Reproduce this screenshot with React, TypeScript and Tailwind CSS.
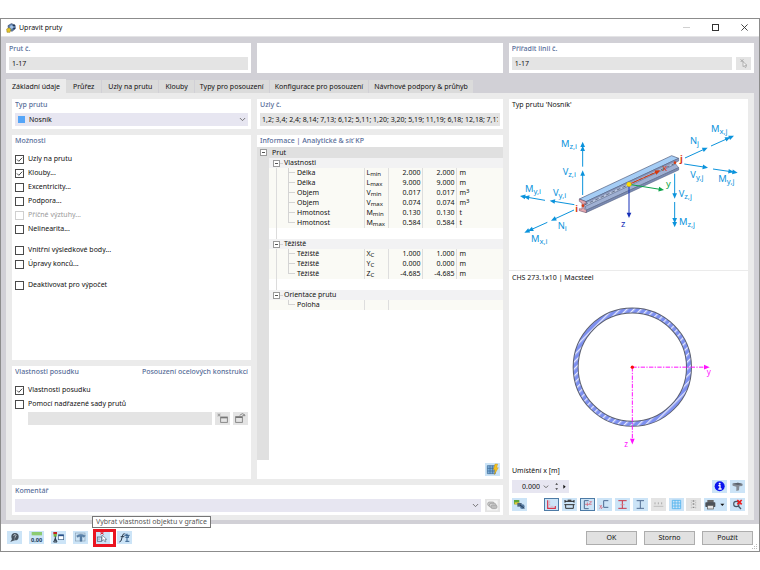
import type { ReactNode } from "react";

const FONT = "font-['Noto_Sans','Open_Sans',sans-serif]";

function Panel({ title, children, className = "" }: { title?: ReactNode; children?: ReactNode; className?: string }) {
  return (
    <section className={`min-w-0 bg-white px-[3px] pb-[3px] ${className}`}>
      {title && <h2 className="mb-0.5 h-3 truncate leading-3 font-medium text-[#566c98]">{title}</h2>}
      {children}
    </section>
  );
}

function Glyph({ children, box = "0 0 45 39" }: { children: ReactNode; box?: string }) {
  return (
    <svg viewBox={box} className="block h-full w-full" fill="none" aria-hidden="true">
      {children}
    </svg>
  );
}

function IconButton({
  label,
  children,
  tone = "blue",
  pressed = false,
}: {
  label: string;
  children: ReactNode;
  tone?: "blue" | "gray";
  pressed?: boolean;
}) {
  const bg = tone === "blue" ? "bg-[#cce4f7]" : "bg-[#e4e4e4]";
  return (
    <button
      type="button"
      aria-label={label}
      aria-pressed={pressed}
      className={`block h-[13px] w-[15px] shrink-0 ${bg} ${pressed ? "outline outline-1 -outline-offset-1 outline-[#4d7ba6]" : ""}`}
    >
      <Glyph>{children}</Glyph>
    </button>
  );
}

function Check({ label, checked = false, disabled = false }: { label: string; checked?: boolean; disabled?: boolean }) {
  return (
    <label className={`flex h-3.5 items-center gap-1 ${disabled ? "text-[#9a9a9a]" : ""}`}>
      <span className="relative block size-[9px]">
        <input
          type="checkbox"
          defaultChecked={checked}
          disabled={disabled}
          className="peer block size-[9px] appearance-none border border-[#4a4a4a] bg-white disabled:border-[#cfcfcf]"
        />
        <svg viewBox="0 0 9 9" className="pointer-events-none absolute inset-0 hidden size-[9px] peer-checked:block" fill="none" aria-hidden="true">
          <path d="M2 4.5 L3.8 6.3 L7.2 2.7" stroke="#333" strokeWidth="0.9" />
        </svg>
      </span>
      {label}
    </label>
  );
}

function Chevron() {
  return (
    <svg viewBox="0 0 8 8" className="pointer-events-none absolute top-[3px] right-[2px] size-[7px]" fill="none" aria-hidden="true">
      <path d="M1 2.3 L4 5.3 L7 2.3" stroke="#666" strokeWidth="1" />
    </svg>
  );
}

const tabs = [
  { name: "Základní údaje", pad: "px-[6px]" },
  { name: "Průřez", pad: "px-[7px]" },
  { name: "Uzly na prutu", pad: "px-[6px]" },
  { name: "Klouby", pad: "px-[6px]" },
  { name: "Typy pro posouzení", pad: "px-[5px]" },
  { name: "Konfigurace pro posouzení", pad: "px-[5px]" },
  { name: "Návrhové podpory & průhyb", pad: "px-[5px]" },
];

type Row =
  | { kind: "group"; name: string }
  | { kind: "blank" }
  | { kind: "item"; name: string; sym?: string; sub?: string; a?: string; b?: string; unit?: string; sup?: string; last?: boolean };

const rows: Row[] = [
  { kind: "group", name: "Vlastnosti" },
  { kind: "item", name: "Délka", sym: "L", sub: "min", a: "2.000", b: "2.000", unit: "m" },
  { kind: "item", name: "Délka", sym: "L", sub: "max", a: "9.000", b: "9.000", unit: "m" },
  { kind: "item", name: "Objem", sym: "V", sub: "min", a: "0.017", b: "0.017", unit: "m", sup: "3" },
  { kind: "item", name: "Objem", sym: "V", sub: "max", a: "0.074", b: "0.074", unit: "m", sup: "3" },
  { kind: "item", name: "Hmotnost", sym: "M", sub: "min", a: "0.130", b: "0.130", unit: "t" },
  { kind: "item", name: "Hmotnost", sym: "M", sub: "max", a: "0.584", b: "0.584", unit: "t", last: true },
  { kind: "blank" },
  { kind: "group", name: "Těžiště" },
  { kind: "item", name: "Těžiště", sym: "X", sub: "C", a: "1.000", b: "1.000", unit: "m" },
  { kind: "item", name: "Těžiště", sym: "Y", sub: "C", a: "0.000", b: "0.000", unit: "m" },
  { kind: "item", name: "Těžiště", sym: "Z", sub: "C", a: "-4.685", b: "-4.685", unit: "m", last: true },
  { kind: "blank" },
  { kind: "group", name: "Orientace prutu" },
  { kind: "item", name: "Poloha", last: true },
];

function Toggle() {
  return (
    <button type="button" aria-label="Sbalit" className="flex size-[7px] items-center justify-center border border-[#9a9a9a] bg-white">
      <span className="block h-px w-[3px] bg-[#555]" />
    </button>
  );
}

function PropertyTable() {
  const lastGroup = rows.map((r) => r.kind).lastIndexOf("group");
  return (
    <table className="w-full table-fixed border-collapse">
      <colgroup>
        <col className="w-3" />
        <col className="w-[95px]" />
        <col className="w-6" />
        <col className="w-[34px]" />
        <col className="w-[34px]" />
        <col />
      </colgroup>
      <tbody>
        <tr className="h-[11px] bg-[#e0e0e0]">
          <td className="p-0 pl-[3px]">
            <Toggle />
          </td>
          <th colSpan={5} className="p-0 pl-[3px] text-left font-normal leading-[11px]">
            Prut
          </th>
        </tr>
        {rows.map((row, i) => {
          const strip = <td className="bg-[#e0e0e0] p-0" />;
          if (row.kind === "blank") {
            return (
              <tr key={i} className="h-[11px]">
                {strip}
                <td colSpan={5} className="p-0">
                  <span className="ml-[7px] block h-[11px] w-px bg-[#dcdcdc]" />
                </td>
              </tr>
            );
          }
          if (row.kind === "group") {
            return (
              <tr key={i} className="h-[10px] bg-[#f2f2f3]">
                {strip}
                <th colSpan={5} className="p-0 text-left font-normal">
                  <div className="flex h-[10px] items-center pl-1 leading-[10px]">
                    <Toggle />
                    <span className="mr-px block h-px w-[3px] bg-[#d4d4d4]" />
                    {row.name}
                  </div>
                </th>
              </tr>
            );
          }
          return (
            <tr key={i} className="h-[10px] bg-[#fafaf5]">
              {strip}
              <th className="p-0 text-left font-normal">
                <div className="flex h-[10px] leading-[10px]">
                  <span className={`ml-[7px] block w-px ${i < lastGroup ? "bg-[#dcdcdc]" : ""}`} />
                  <span className={`ml-[11px] block w-px bg-[#d4d4d4] ${row.last ? "h-[5px]" : ""}`} />
                  <span className="mt-1 mr-0.5 block h-px w-1.5 bg-[#d4d4d4]" />
                  {row.name}
                </div>
              </th>
              <td className="border-l border-[#dedede] p-0 pl-0.5">
                <div className="h-[10px] leading-[10px] whitespace-nowrap">
                  {row.sym}
                  <span className="relative top-px text-[6px]">{row.sub}</span>
                </div>
              </td>
              <td className="border-l border-[#dedede] p-0 pr-px text-right leading-[10px]">{row.a}</td>
              <td className={`p-0 pr-px text-right leading-[10px] ${row.a ? "border-l border-[#dedede]" : ""}`}>{row.b}</td>
              <td className={`p-0 pl-[3px] leading-[10px] ${row.a ? "border-l border-[#dedede]" : ""}`}>
                <div className="h-[10px]">
                  {row.unit}
                  <span className="relative -top-0.5 text-[6px]">{row.sup}</span>
                </div>
              </td>
            </tr>
          );
        })}
      </tbody>
    </table>
  );
}

function Arrow({ x1, y1, x2, y2, color = "#0b93dc", double = false, w = 3 }: { x1: number; y1: number; x2: number; y2: number; color?: string; double?: boolean; w?: number }) {
  const len = Math.hypot(x2 - x1, y2 - y1);
  const ux = (x2 - x1) / len;
  const uy = (y2 - y1) / len;
  const head = (tx: number, ty: number) =>
    `${tx},${ty} ${tx - ux * 16 - uy * 7},${ty - uy * 16 + ux * 7} ${tx - ux * 16 + uy * 7},${ty - uy * 16 - ux * 7}`;
  return (
    <g>
      <line x1={x1} y1={y1} x2={x2 - ux * 10} y2={y2 - uy * 10} stroke={color} strokeWidth={w} />
      <polygon points={head(x2, y2)} fill={color} />
      {double && <polygon points={head(x2 - ux * 12, y2 - uy * 12)} fill={color} />}
    </g>
  );
}

function Force({ x, y, main, sub }: { x: number; y: number; main: string; sub: string }) {
  return (
    <text x={x} y={y} fill="#0b93dc" fontSize="28">
      {main}
      <tspan fontSize="23" dy="6">
        {sub}
      </tspan>
    </text>
  );
}

function BeamDiagram() {
  return (
    <svg viewBox="12 48 717 477" className="block h-[159px] w-full" role="img" aria-label="Nosník">
      <polygon points="223,312 500,182 521,190 243,320" fill="#a5cdf5" stroke="#4a5878" strokeWidth="2" />
      <polygon points="243,320 521,190 521,198 243,328" fill="#8797bd" stroke="#4a5878" strokeWidth="1.5" />
      <polygon points="237,328 512,200 512,216 237,344" fill="#b9c5de" />
      <polygon points="241,334 512,207 521,218 243,346" fill="#9fb0d3" stroke="#4a5878" strokeWidth="1.5" />
      <polygon points="243,346 521,218 521,225 243,353" fill="#7b8bb3" stroke="#4a5878" strokeWidth="1.5" />
      <line x1="238" y1="330" x2="512" y2="204" stroke="#333f5c" strokeWidth="2" strokeDasharray="11 7" />
      <polygon points="223,312 243,320 243,327 237,326 237,341 245,347 243,353 223,347 223,341 231,342 231,324 223,319" fill="#e3a6ad" stroke="#5a4560" strokeWidth="1.5" />
      <circle cx="234" cy="332" r="4" fill="#d93a10" />
      <circle cx="510" cy="203" r="4" fill="#d93a10" />
      <Arrow x1={233} y1={300} x2={233} y2={226} />
      <Arrow x1={233} y1={215} x2={233} y2={140} double />
      <Arrow x1={208} y1={329} x2={134} y2={317} />
      <Arrow x1={120} y1={316} x2={45} y2={303} double />
      <Arrow x1={207} y1={345} x2={138} y2={377} />
      <Arrow x1={127} y1={382} x2={58} y2={413} double />
      <Arrow x1={540} y1={189} x2={608} y2={158} />
      <Arrow x1={618} y1={153} x2={687} y2={122} double />
      <Arrow x1={538} y1={207} x2={609} y2={218} />
      <Arrow x1={624} y1={222} x2={698} y2={233} double />
      <Arrow x1={509} y1={236} x2={509} y2={311} />
      <Arrow x1={509} y1={321} x2={509} y2={397} double />
      <Arrow x1={372} y1={268} x2={372} y2={369} color="#1730b8" />
      <Arrow x1={372} y1={268} x2={477} y2={285} color="#0ca34a" />
      <Arrow x1={372} y1={268} x2={466} y2={226} color="#d8360c" />
      <circle cx="372" cy="268" r="7" fill="#ffe000" stroke="#c9a800" />
      <Force x={168} y={155} main="M" sub="z,i" />
      <Force x={173} y={239} main="V" sub="z,i" />
      <Force x={60} y={291} main="M" sub="y,i" />
      <Force x={144} y={304} main="V" sub="y,i" />
      <Force x={158} y={402} main="N" sub="i" />
      <Force x={78} y={442} main="M" sub="x,i" />
      <Force x={555} y={148} main="N" sub="j" />
      <Force x={618} y={110} main="M" sub="x,j" />
      <Force x={556} y={249} main="V" sub="y,j" />
      <Force x={640} y={262} main="M" sub="y,j" />
      <Force x={521} y={307} main="V" sub="z,j" />
      <Force x={522} y={391} main="M" sub="z,j" />
      <text x="472" y="228" fontSize="28" fill="#d8360c">x</text>
      <text x="483" y="276" fontSize="28" fill="#0ca34a">y</text>
      <text x="348" y="395" fontSize="28" fill="#1730b8">z</text>
      <text x="211" y="350" fontSize="28" fontWeight="700" fill="#d8360c">i</text>
      <text x="525" y="200" fontSize="28" fontWeight="700" fill="#d8360c">j</text>
    </svg>
  );
}

function SectionDiagram() {
  return (
    <svg viewBox="12 69 717 540" className="block min-h-[180px] w-full flex-1" role="img" aria-label="CHS 273.1x10">
      <defs>
        <pattern id="hatch" width="15" height="15" patternUnits="userSpaceOnUse" patternTransform="rotate(45)">
          <rect width="15" height="15" fill="#7d90f0" />
          <rect width="4" height="15" fill="#e4e8fd" />
        </pattern>
      </defs>
      <circle cx="382" cy="320" r="170" fill="none" stroke="#5c6070" strokeWidth="18" />
      <circle cx="382" cy="320" r="170" fill="none" stroke="url(#hatch)" strokeWidth="12" />
      <g stroke="#ff10ff" strokeWidth="3" strokeDasharray="13 4 4 4">
        <line x1="382" y1="320" x2="600" y2="320" />
        <line x1="382" y1="320" x2="382" y2="540" />
      </g>
      <polygon points="614,320 597,313 597,327" fill="#ff10ff" />
      <polygon points="382,552 375,535 389,535" fill="#ff10ff" />
      <circle cx="382" cy="320" r="5" fill="#ff0a0a" />
      <text x="605" y="344" fontSize="24" fill="#ff10ff">y</text>
      <text x="358" y="559" fontSize="24" fill="#ff10ff">z</text>
    </svg>
  );
}

function SectionToolbar() {
  return (
    <div className="flex items-center">
      <IconButton label="Zobrazit">
        <rect x="6" y="6" width="16" height="13" fill="#5aa63c" />
        <rect x="8" y="13" width="13" height="6" fill="#e8c83c" />
        <rect x="16" y="15" width="13" height="11" fill="#4d6480" />
        <circle cx="31" cy="26" r="7" fill="#52769c" />
        <path d="M24 21 L37 31" stroke="#263c58" strokeWidth="3" />
      </IconButton>
      <div className="ml-[17px] flex flex-1 items-center justify-between">
        <IconButton label="Obrys" pressed>
          <path d="M11 7 V31 H34 V24" stroke="#d8354a" strokeWidth="3.5" />
          <path d="M17 8 V24 M20 25 H30" stroke="#e18a97" strokeWidth="2" strokeDasharray="3 2" />
        </IconButton>
        <IconButton label="Rozměry">
          <path d="M9 10 H36 M9 6 V14 M36 6 V14" stroke="#222" strokeWidth="3" />
          <rect x="17" y="5" width="11" height="7" fill="#444" />
          <path d="M7 20 H38" stroke="#333" strokeWidth="3" />
          <path d="M11 20 V31 H34 V20" stroke="#333" strokeWidth="3" />
        </IconButton>
        <IconButton label="Osy" pressed>
          <path d="M26 8 H13 V32 H26" stroke="#4b6a92" strokeWidth="3" />
          <path d="M15 19 H35 M22 13 V24 M28 11 H35 L28 18" stroke="#da5468" strokeWidth="2" />
        </IconButton>
        <IconButton label="Souřadnice">
          <path d="M34 8 H20 V28 H34" stroke="#4b6a92" strokeWidth="3" />
          <path d="M8 21 L14 29 M14 21 L8 32 M17 28 L12 33" stroke="#da5468" strokeWidth="2" />
        </IconButton>
        <IconButton label="Hlavní osy">
          <path d="M10 8 H35 M10 31 H35" stroke="#c9384a" strokeWidth="3" />
          <path d="M22 8 V31" stroke="#c9384a" strokeWidth="3" />
          <path d="M16 20 H29" stroke="#e58a94" strokeWidth="2" />
        </IconButton>
        <IconButton label="Stojina">
          <path d="M11 8 H33 M11 31 H33 M22 8 V31" stroke="#536f94" strokeWidth="3" />
        </IconButton>
        <IconButton label="Číslování" tone="gray">
          <path d="M8 25 H37" stroke="#aaa" strokeWidth="2" />
          <path d="M12 13 V19 M22 13 V19 M32 13 V19" stroke="#aaa" strokeWidth="3" />
        </IconButton>
        <IconButton label="Rastr">
          <path d="M10 7 H35 V32 H10 Z M18 7 V32 M27 7 V32 M10 15 H35 M10 24 H35" stroke="#50b3ee" strokeWidth="2.5" />
        </IconButton>
        <IconButton label="Body" tone="gray">
          <path d="M16 7 V33 M29 7 V33" stroke="#aaa" strokeWidth="2" strokeDasharray="3 2" />
          <path d="M20 9 H25 M20 18 H25 M20 28 H25" stroke="#888" strokeWidth="4" />
        </IconButton>
        <button type="button" aria-label="Tisk" className="block h-[13px] w-[23px] shrink-0 bg-[#cce4f7]">
          <Glyph box="0 0 69 39">
            <rect x="10" y="6" width="19" height="9" fill="#666" />
            <rect x="4" y="13" width="30" height="14" rx="2" fill="#4c5259" />
            <rect x="10" y="22" width="18" height="11" fill="#e4e4e4" stroke="#555" strokeWidth="2" />
            <polygon points="49,17 61,17 55,24" fill="#111" />
          </Glyph>
        </button>
        <IconButton label="Zrušit lupu">
          <circle cx="19" cy="18" r="8" stroke="#485667" strokeWidth="3.5" />
          <path d="M25 24 L33 33" stroke="#485667" strokeWidth="4" />
          <path d="M22 6 L35 19 M35 6 L22 19" stroke="#ec1c1c" strokeWidth="5" />
        </IconButton>
      </div>
    </div>
  );
}

const fieldClass = "block h-[13px] w-full min-w-0 bg-[#e4e4e4] px-[3px] outline-none";

export default function App() {
  return (
    <div className={`flex min-h-screen flex-col bg-white py-[18px] text-[7px] leading-[10px] text-[#111] ${FONT}`}>
      <main className="flex flex-1 flex-col border border-[#8c8c8c] bg-white">
        <header className="flex h-[18px] items-center justify-between border-b border-[#e4e4e6] pr-[11px] pl-[5px]">
          <div className="flex items-center gap-[3px]">
            <svg viewBox="0 0 30 30" className="size-[10px]" aria-hidden="true">
              <polygon points="6,8 16,2 27,6 28,17 18,25 8,20" fill="#5e84b5" stroke="#2c405f" strokeWidth="2" />
              <circle cx="17" cy="12" r="5" fill="#a9c5e6" />
              <path d="M20 8 L27 7 M20 18 L27 16" stroke="#22344d" strokeWidth="3" />
              <polygon points="2,18 9,14 15,19 12,28 3,28" fill="#e5c52a" stroke="#8b7720" strokeWidth="1.5" />
            </svg>
            <h1 className="text-[7px]">Upravit pruty</h1>
          </div>
          <div className="flex items-center gap-[22px]">
            <button type="button" aria-label="Minimalizovat" className="flex size-[7px] items-center">
              <span className="block h-px w-[7px] bg-[#d0d0d0]" />
            </button>
            <button type="button" aria-label="Maximalizovat" className="block size-[7px] border border-[#333]" />
            <button type="button" aria-label="Zavřít" className="block size-[7px]">
              <svg viewBox="0 0 7 7" className="size-[7px]" aria-hidden="true">
                <path d="M0.4 0.4 L6.6 6.6 M6.6 0.4 L0.4 6.6" stroke="#333" strokeWidth="0.9" />
              </svg>
            </button>
          </div>
        </header>

        <div className="flex flex-1 flex-col bg-[#d1d0d6] px-[5px] pt-1.5 pb-1">
          <div className="grid grid-cols-3 gap-1.5">
            <Panel title={<label htmlFor="prut">Prut č.</label>}>
              <input id="prut" readOnly defaultValue="1-17" className={fieldClass} />
            </Panel>
            <Panel />
            <Panel title={<label htmlFor="linie">Přiřadit linii č.</label>}>
              <div className="flex gap-1">
                <input id="linie" readOnly defaultValue="1-17" className={fieldClass} />
                <IconButton label="Vybrat linii" tone="gray">
                  <path d="M14 7 L22 15 M22 7 L14 15" stroke="#999" strokeWidth="2.5" />
                  <path d="M21 14 V29 L25 26 L28 32 L31 30 L28 25 H33 Z" fill="#f4f4f4" stroke="#999" strokeWidth="2" />
                </IconButton>
              </div>
            </Panel>
          </div>

          <div role="tablist" className="mt-1.5 flex items-end">
            {tabs.map((t, i) => (
              <button
                key={t.name}
                type="button"
                role="tab"
                aria-selected={i === 0}
                className={`whitespace-nowrap leading-[13px] ${t.pad} ${
                  i === 0 ? "h-3.5 bg-[#ebebeb]" : "h-[13px] border-r border-[#d1d0d6] bg-[#dbdbdb]"
                }`}
              >
                {t.name}
              </button>
            ))}
          </div>

          <div className="grid flex-1 grid-cols-[minmax(0,239fr)_minmax(0,246fr)_minmax(0,239fr)] grid-rows-[1fr_auto] gap-1.5 bg-[#ebebeb] px-1.5 pt-1.5 pb-[5px]">
            <div className="flex flex-col gap-1.5">
              <Panel title={<label htmlFor="typ">Typ prutu</label>}>
                <div className="relative">
                  <select id="typ" className="block h-[13px] w-full appearance-none bg-[#e7e6f1] pl-[14px]">
                    <option>Nosník</option>
                  </select>
                  <span className="pointer-events-none absolute top-[3px] left-[3px] size-[7px] bg-[#55a5f8]" />
                  <Chevron />
                </div>
              </Panel>
              <Panel title="Možnosti" className="flex-1">
                <div className="pt-[3px]">
                  <Check label="Uzly na prutu" checked />
                  <Check label="Klouby..." checked />
                  <Check label="Excentricity..." />
                  <Check label="Podpora..." />
                  <Check label="Příčné výztuhy..." disabled />
                  <Check label="Nelinearita..." />
                </div>
                <div className="pt-[7px]">
                  <Check label="Vnitřní výsledkové body..." />
                  <Check label="Úpravy konců..." />
                </div>
                <div className="pt-[7px]">
                  <Check label="Deaktivovat pro výpočet" />
                </div>
              </Panel>
              <Panel
                className="h-[113px]"
                title={
                  <span className="flex justify-between">
                    <span>Vlastnosti posudku</span>
                    <span>Posouzení ocelových konstrukcí</span>
                  </span>
                }
              >
                <div className="pt-[3px]">
                  <Check label="Vlastnosti posudku" checked />
                  <Check label="Pomocí nadřazené sady prutů" />
                </div>
                <div className="mt-px flex gap-[3px] pl-[13px]">
                  <input aria-label="Sada prutů" disabled className={fieldClass} />
                  <IconButton label="Nová sada" tone="gray">
                    <rect x="17" y="15" width="20" height="16" stroke="#777" strokeWidth="2.5" />
                    <path d="M17 17 H37" stroke="#777" strokeWidth="4" />
                    <path d="M12 4 V14 M7 9 H17 M8 5 L16 13 M16 5 L8 13" stroke="#999" strokeWidth="2" />
                  </IconButton>
                  <IconButton label="Upravit sadu" tone="gray">
                    <rect x="8" y="14" width="20" height="17" stroke="#777" strokeWidth="2.5" />
                    <path d="M8 16 H28" stroke="#777" strokeWidth="4" />
                    <path d="M20 10 L28 5 L36 9 M28 11 H37" stroke="#888" strokeWidth="3" />
                  </IconButton>
                </div>
              </Panel>
            </div>

            <div className="flex flex-col gap-1.5">
              <Panel title={<label htmlFor="uzly">Uzly č.</label>}>
                <input
                  id="uzly"
                  readOnly
                  defaultValue="1,2; 3,4; 2,4; 8,14; 7,13; 6,12; 5,11; 1,20; 3,20; 5,19; 11,19; 6,18; 12,18; 7,17; 13,17"
                  className="block h-[13px] w-full min-w-0 bg-[#e4e4e4] px-0.5 outline-none"
                />
              </Panel>
              <section className="flex flex-1 flex-col bg-white">
                <h2 className="h-3 px-[3px] leading-3 font-medium text-[#566c98]">Informace | Analytické &amp; síť KP</h2>
                <PropertyTable />
                <div className="w-3 flex-1 bg-[#e0e0e0]" />
                <div className="flex justify-end px-[3px] py-[3px]">
                  <IconButton label="Generovat síť">
                    <rect x="7" y="8" width="24" height="24" fill="#7baedb" />
                    <path d="M7 8 H31 V32 H7 Z M15 8 V32 M23 8 V32 M7 16 H31 M7 24 H31" stroke="#3a6791" strokeWidth="2" />
                    <polygon points="30,3 38,3 35,14 40,14 28,35 30,20 25,20" fill="#f5c11e" stroke="#b98a10" />
                  </IconButton>
                </div>
              </section>
            </div>

            <section className="row-span-2 flex min-w-0 flex-col bg-white">
              <h2 className="h-3 px-[3px] leading-3">Typ prutu &#x27;Nosník&#x27;</h2>
              <BeamDiagram />
              <h2 className="h-[13px] border-t border-[#ebebeb] px-[3px] leading-[13px]">CHS 273.1x10 | Macsteel</h2>
              <SectionDiagram />
              <div className="px-[3px] pb-1">
                <label htmlFor="pos" className="block h-[13px] leading-[13px]">
                  Umístění x [m]
                </label>
                <div className="mt-[3px] mb-[5px] flex justify-between">
                  <div className="flex h-[13px] w-[57px] items-center bg-[#e7e6f1]">
                    <input id="pos" defaultValue="0.000" className="w-[28px] bg-transparent text-right outline-none" />
                    <svg viewBox="0 0 84 39" className="h-[13px] w-7" fill="none" aria-hidden="true">
                      <path d="M11 17 L18 23 L25 17" stroke="#666" strokeWidth="2.5" />
                      <polygon points="46,14 54,14 50,9" fill="#333" />
                      <polygon points="46,25 54,25 50,30" fill="#333" />
                      <polygon points="70,14 70,26 77,20" fill="#111" />
                    </svg>
                  </div>
                  <div className="flex gap-[3px]">
                    <IconButton label="Informace">
                      <circle cx="23" cy="19" r="15" fill="#0a14ee" />
                      <circle cx="23" cy="11" r="3" fill="#fff" />
                      <path d="M19 17 H24 V27 M19 27 H29" stroke="#fff" strokeWidth="4" />
                    </IconButton>
                    <IconButton label="Průřez">
                      <path d="M7 11 L24 8 L38 12 L37 18 L28 19 L27 31 L19 33 V20 L8 17 Z" fill="#848b95" />
                      <path d="M7 11 L24 8 L38 12 L24 15 Z" fill="#59616c" />
                    </IconButton>
                  </div>
                </div>
                <SectionToolbar />
              </div>
            </section>

            <Panel className="col-span-2" title={<label htmlFor="komentar">Komentář</label>}>
              <div className="flex gap-1">
                <div className="relative min-w-0 flex-1">
                  <select id="komentar" className="block h-[13px] w-full appearance-none bg-[#e7e6f1]">
                    <option></option>
                  </select>
                  <Chevron />
                </div>
                <IconButton label="Komentáře" tone="gray">
                  <rect x="6" y="4" width="32" height="30" fill="#f5f5f5" />
                  <rect x="8" y="9" width="20" height="12" rx="5" fill="#c9c9c9" stroke="#999" strokeWidth="2" />
                  <rect x="13" y="13" width="20" height="12" rx="5" fill="#d5d5d5" stroke="#999" strokeWidth="2" />
                  <rect x="18" y="18" width="18" height="11" rx="5" fill="#bdbdbd" stroke="#999" strokeWidth="2" />
                </IconButton>
              </div>
            </Panel>
          </div>
        </div>

        <footer className="relative flex h-[27px] items-start justify-between px-1.5 pt-[7px]">
          <div className="flex gap-[7px]">
            <IconButton label="Nápověda">
              <circle cx="24" cy="17" r="11" fill="#47525e" />
              <path d="M10 33 L17 20 L24 27 Z" fill="#47525e" />
              <path d="M20 14 Q21 10 25 11 Q29 13 25 17 L24 20 M23 23 V25" stroke="#dfe8f0" strokeWidth="2.5" />
            </IconButton>
            <IconButton label="Jednotky">
              <rect x="8" y="3" width="31" height="10" fill="#8ccb72" />
              <text x="6" y="32" fontSize="17" fontWeight="700" fill="#25405c">0,00</text>
            </IconButton>
            <IconButton label="Zobrazení">
              <rect x="7" y="3" width="11" height="7" fill="#c42222" />
              <rect x="8" y="9" width="9" height="8" fill="#7ab83a" />
              <path d="M13 16 V31 M8 33 L13 22 L18 33 Z" stroke="#283848" strokeWidth="3" />
              <rect x="22" y="12" width="16" height="14" fill="#fff" stroke="#3d5d84" strokeWidth="2" />
              <path d="M22 13 H38" stroke="#27508a" strokeWidth="5" />
            </IconButton>
            <IconButton label="Průřez">
              <rect x="7" y="6" width="29" height="24" stroke="#8ba2b8" strokeWidth="2" />
              <path d="M11 14 Q23 5 37 14 L33 19 L27 16 V31 H21 V16 L13 19 Z" fill="#5a83ac" stroke="#39577a" />
            </IconButton>
            <div className="relative">
              <IconButton label="Vybrat vlastnosti objektu v grafice">
                <path d="M16 3 L26 10 M26 3 L16 10" stroke="#e02030" strokeWidth="3" />
                <rect x="7" y="18" width="13" height="13" stroke="#5b6f86" strokeWidth="2.5" />
                <path d="M12 22 V27" stroke="#5b6f86" strokeWidth="2" />
                <path d="M21 12 V30 L26 26 L30 33 L33 31 L30 25 H35 Z" fill="#fff" stroke="#5b6f86" strokeWidth="2" />
              </IconButton>
              <span className="pointer-events-none absolute -top-0.5 -right-1.5 -bottom-[3px] -left-0.5 border-[3px] border-[#ea1420]" />
              <span role="tooltip" className="absolute bottom-full -left-[3px] mb-[3px] border border-[#767676] bg-white px-[3px] leading-[10px] whitespace-nowrap text-[#555]">
                Vybrat vlastnosti objektu v grafice
              </span>
            </div>
            <IconButton label="Funkce">
              <path d="M7 33 Q13 33 15 20 Q17 6 23 8 M11 17 H22" stroke="#28384a" strokeWidth="3" />
              <path d="M22 13 H38 M25 19 H36 M25 31 H37 M30 8 V31 M25 9 L36 17" stroke="#35618e" strokeWidth="3" />
            </IconButton>
          </div>
          <div className="flex gap-[7px]">
            {["OK", "Storno", "Použít"].map((b) => (
              <button key={b} type="button" className="h-3.5 w-[51px] border border-[#adadad] bg-[#e1e1e1] leading-3">
                {b}
              </button>
            ))}
          </div>
          <svg viewBox="0 0 6 6" className="absolute right-px bottom-px size-[6px]" fill="#bbb" aria-hidden="true">
            <path d="M4 0h1v1h-1z M2 2h1v1h-1z M4 2h1v1h-1z M0 4h1v1h-1z M2 4h1v1h-1z M4 4h1v1h-1z" />
          </svg>
        </footer>
      </main>
    </div>
  );
}
